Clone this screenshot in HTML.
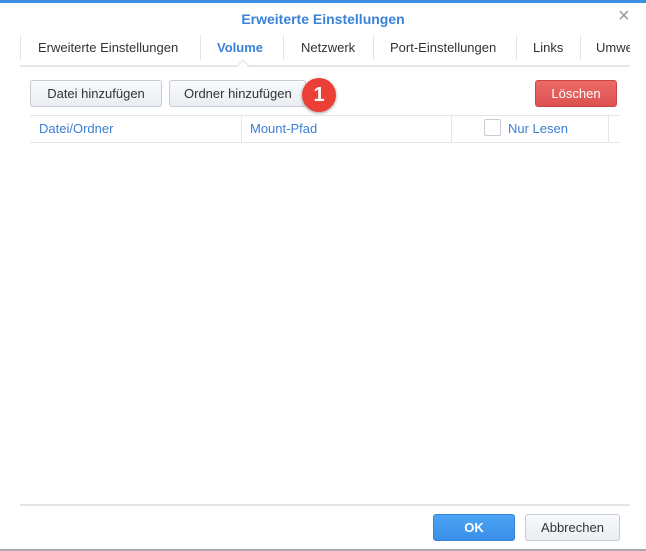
<!DOCTYPE html>
<html><head><style>
*{margin:0;padding:0;box-sizing:border-box}
body{width:646px;height:551px;background:#fff;font-family:"Liberation Sans",sans-serif;position:relative;overflow:hidden;font-size:13px;color:#333}
.a{position:absolute}
.btn{position:absolute;border:1px solid #c6ccd3;border-radius:3px;background:linear-gradient(#f8fafc,#eaeef2);text-align:center;line-height:25px;font-size:13px;color:#333}
.tab{position:absolute;top:40px;font-size:13px;color:#333;white-space:nowrap}
.sep{position:absolute;top:35px;width:1px;height:25px;background:#e2e5e8}
.th{position:absolute;top:121px;color:#3b7fd4;font-size:13px}
.vs{position:absolute;top:116px;width:1px;height:26px;background:#e4e7ea}
</style></head><body>
<div class="a" style="left:0;top:0;width:646px;height:3px;background:#3d8fe4"></div>
<div class="a" style="left:0;top:11px;width:646px;text-align:center;font-weight:bold;font-size:14px;color:#3a82d8">Erweiterte Einstellungen</div>
<div class="a" style="left:618px;top:5px;font-size:20px;color:#999">×</div>
<div class="sep" style="left:20px"></div>
<div class="tab" style="left:38px">Erweiterte Einstellungen</div>
<div class="sep" style="left:200px"></div>
<div class="tab" style="left:217px;font-weight:bold;color:#3a82d8">Volume</div>
<div class="sep" style="left:283px"></div>
<div class="tab" style="left:301px">Netzwerk</div>
<div class="sep" style="left:373px"></div>
<div class="tab" style="left:390px">Port-Einstellungen</div>
<div class="sep" style="left:516px"></div>
<div class="tab" style="left:533px">Links</div>
<div class="sep" style="left:580px"></div>
<div class="tab" style="left:596px;width:34px;overflow:hidden">Umwelt</div>
<div class="a" style="left:20px;top:65px;width:610px;height:2px;background:#e3e6ea"></div>
<div class="a" style="left:239px;top:61px;width:8px;height:8px;background:#fff;border-left:1px solid #dde1e5;border-top:1px solid #dde1e5;transform:rotate(45deg)"></div>
<div class="btn" style="left:30px;top:80px;width:132px;height:27px">Datei hinzufügen</div>
<div class="btn" style="left:169px;top:80px;width:137px;height:27px;text-align:left;padding-left:14px">Ordner hinzufügen</div>
<div class="a" style="left:302px;top:78px;width:34px;height:34px;border-radius:50%;background:#ec3f36;box-shadow:0 1px 3px rgba(0,0,0,.4);color:#fff;font-size:20px;font-weight:bold;text-align:center;line-height:34px">1</div>
<div class="btn" style="left:535px;top:80px;width:82px;height:27px;background:linear-gradient(#ec6a66,#dd5250);border-color:#c84744;color:#fff">Löschen</div>
<div class="a" style="left:30px;top:115px;width:590px;height:1px;background:#e4e7ea"></div>
<div class="a" style="left:30px;top:142px;width:590px;height:1px;background:#e4e7ea"></div>
<div class="vs" style="left:241px"></div><div class="vs" style="left:451px"></div><div class="vs" style="left:608px"></div>
<div class="th" style="left:39px">Datei/Ordner</div>
<div class="th" style="left:250px">Mount-Pfad</div>
<div class="a" style="left:484px;top:119px;width:17px;height:17px;border:1px solid #c8cdd2;border-radius:2px;background:#fff"></div>
<div class="th" style="left:508px">Nur Lesen</div>
<div class="a" style="left:20px;top:504px;width:610px;height:2px;background:#e3e6ea"></div>
<div class="btn" style="left:433px;top:514px;width:82px;height:27px;background:linear-gradient(#4da3f5,#3a8fe8);border-color:#3584d8;color:#fff;font-weight:bold">OK</div>
<div class="btn" style="left:525px;top:514px;width:95px;height:27px">Abbrechen</div>
<div class="a" style="left:0;top:549px;width:646px;height:2px;background:#aaa"></div>
</body></html>
